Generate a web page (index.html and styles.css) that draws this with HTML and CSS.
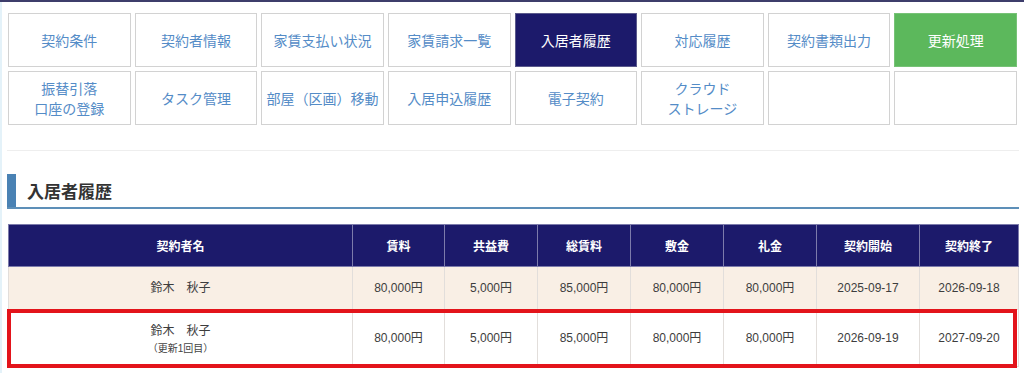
FILE: index.html
```html
<!DOCTYPE html>
<html lang="ja">
<head>
<meta charset="utf-8">
<title>入居者履歴</title>
<link rel="stylesheet" href="styles.css">
</head>
<body>
<div class="page">
  <nav class="tabs">
    <a class="tab">契約条件</a>
    <a class="tab">契約者情報</a>
    <a class="tab">家賃支払い状況</a>
    <a class="tab">家賃請求一覧</a>
    <a class="tab active">入居者履歴</a>
    <a class="tab">対応履歴</a>
    <a class="tab">契約書類出力</a>
    <a class="tab renew">更新処理</a>
    <a class="tab">振替引落<br>口座の登録</a>
    <a class="tab">タスク管理</a>
    <a class="tab">部屋（区画）移動</a>
    <a class="tab">入居申込履歴</a>
    <a class="tab">電子契約</a>
    <a class="tab">クラウド<br>ストレージ</a>
    <a class="tab"></a>
    <a class="tab"></a>
  </nav>
  <hr class="sep">
  <h2 class="section-title">入居者履歴</h2>
  <div class="table-wrap">
    <table class="history">
      <colgroup>
        <col class="c-name"><col class="c-n1"><col class="c-n"><col class="c-n"><col class="c-n"><col class="c-n"><col class="c-d1"><col class="c-d2">
      </colgroup>
      <thead>
        <tr>
          <th>契約者名</th><th>賃料</th><th>共益費</th><th>総賃料</th><th>敷金</th><th>礼金</th><th>契約開始</th><th>契約終了</th>
        </tr>
      </thead>
      <tbody>
        <tr class="past">
          <td>鈴木　秋子</td><td>80,000円</td><td>5,000円</td><td>85,000円</td><td>80,000円</td><td>80,000円</td><td>2025-09-17</td><td>2026-09-18</td>
        </tr>
        <tr class="current">
          <td class="name">鈴木　秋子<br><span class="note">（更新1回目）</span></td><td>80,000円</td><td>5,000円</td><td>85,000円</td><td>80,000円</td><td>80,000円</td><td>2026-09-19</td><td>2027-09-20</td>
        </tr>
      </tbody>
    </table>
    <div class="highlight"></div>
  </div>
</div>
</body>
</html>
```

FILE: styles.css
```css
* { box-sizing: border-box; }

html, body {
  margin: 0;
  padding: 0;
  background: #ffffff;
}

body {
  font-family: "Liberation Sans", "Noto Sans CJK JP", sans-serif;
  color: #333333;
  height: 373px;
  overflow: hidden;
}

.page {
  border-top: 2px solid #3d3d6b;
  padding: 11px 6px 0 8px;
  height: 373px;
  box-shadow: inset 3px 0 0 -1px #e4f2f9;
}

.tabs {
  display: grid;
  grid-template-columns: repeat(8, 1fr);
  grid-auto-rows: 54px;
  column-gap: 4px;
  row-gap: 4px;
  margin-right: 1px;
}

.tab {
  display: flex;
  align-items: center;
  justify-content: center;
  text-align: center;
  border: 1px solid #d2d2d2;
  background: #ffffff;
  color: #548cc7;
  font-family: "Noto Sans CJK JP", sans-serif;
  font-size: 14px;
  line-height: 20px;
  text-decoration: none;
}

.tab.active {
  background: #1c1a6b;
  border-color: #5b5a8c;
  color: #ffffff;
}

.tab.renew {
  background: #5cb85c;
  border-color: #77c277;
  color: #ffffff;
}

.sep {
  border: 0;
  border-top: 1px solid #eeeeee;
  margin: 25px -1px 0 -1px;
}

.section-title {
  margin: 23px -1px 0 -1px;
  padding-left: 20px;
  height: 35px;
  line-height: 33px;
  font-family: "Noto Sans CJK JP", sans-serif;
  font-size: 17px;
  font-weight: 700;
  color: #333333;
  border-bottom: 2px solid #5d8fb8;
  background: linear-gradient(#4a82b4, #4a82b4) no-repeat left top / 9px 100%;
}

.table-wrap {
  position: relative;
  margin-top: 15px;
}

.history {
  width: 1010px;
  table-layout: fixed;
  border-collapse: collapse;
  font-size: 12px;
}

.c-name { width: 344px; }
.c-n1 { width: 92px; }
.c-n { width: 93px; }
.c-d1 { width: 103px; }
.c-d2 { width: 99px; }

.history th {
  height: 42px;
  background: #1c1a6b;
  color: #ffffff;
  font-family: "Noto Sans CJK JP", sans-serif;
  font-weight: 700;
  font-size: 12px;
  border: 1px solid #7c7bab;
  padding: 0;
}

.history td {
  text-align: center;
  border: 1px solid #e2dedb;
  color: #3d3d3d;
  padding: 0;
  line-height: 17px;
}

.history tr.past td {
  height: 43px;
  background: #f9efe5;
}

.history tr.current td {
  height: 57px;
  background: #ffffff;
}

.history tr.current td.name {
  padding-top: 4px;
}

.note {
  font-size: 10px;
  line-height: 18px;
  color: #444444;
}

.highlight {
  position: absolute;
  left: -1px;
  right: 1px;
  bottom: -1px;
  height: 59px;
  border: 4px solid #e3141b;
  pointer-events: none;
}
```
